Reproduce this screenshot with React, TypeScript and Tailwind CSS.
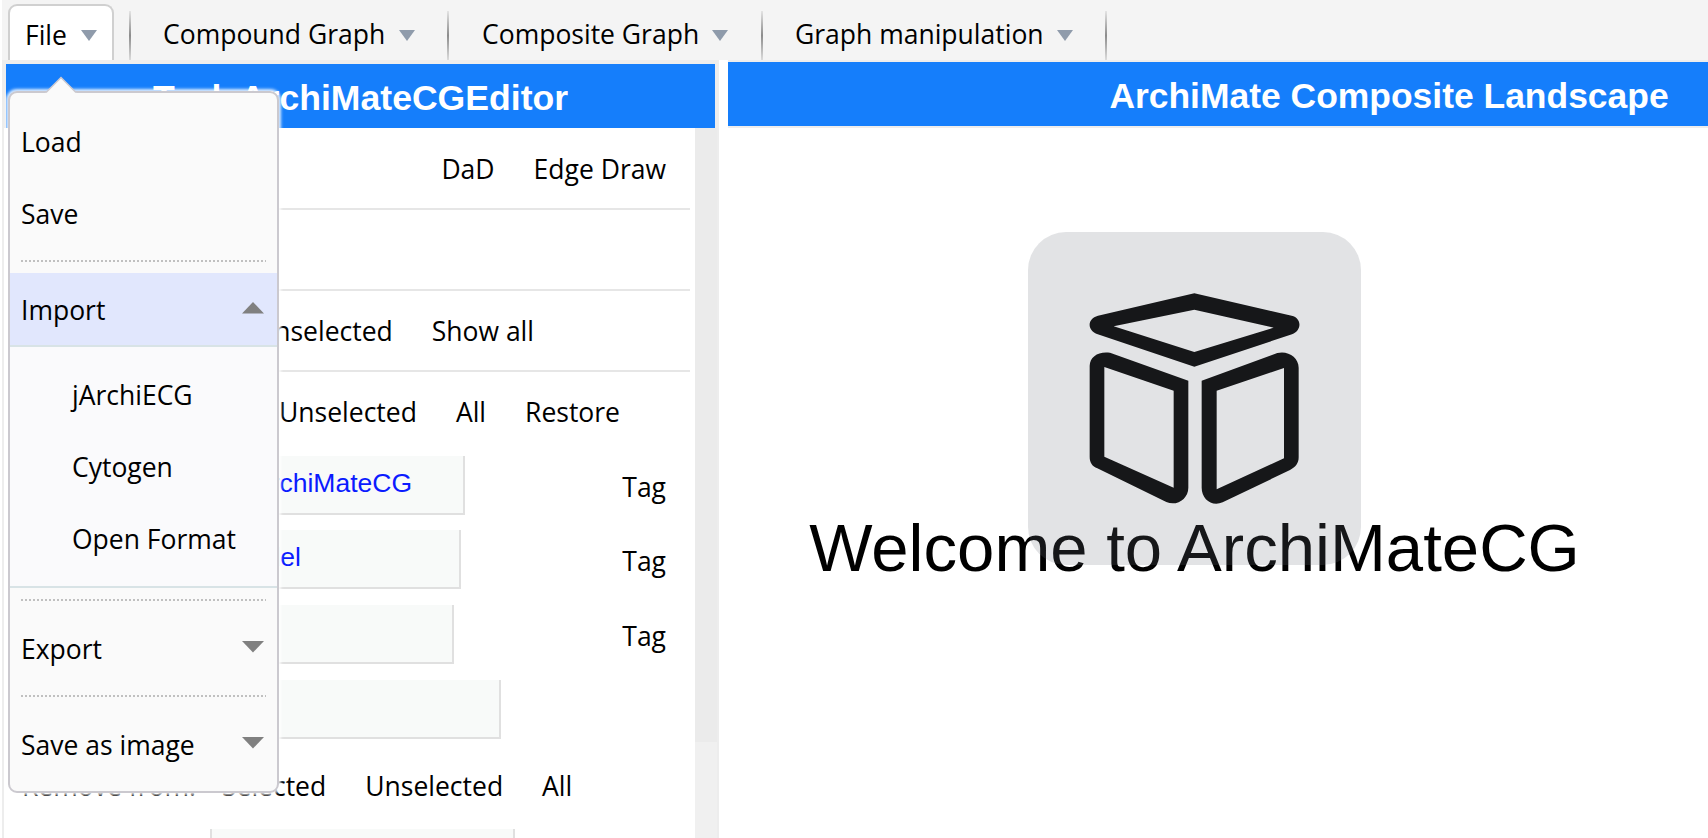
import React from "react";

const Caret = ({ up = false }: { up?: boolean }) => (
  <svg className="mb-[4px] mr-[1px] block shrink-0" width="22" height="12" viewBox="0 0 22 12">
    <path d={up ? "M11 0L22 11.5H0z" : "M11 11.5L22 0H0z"} fill="#808080" />
  </svg>
);

const Sep = () => (
  <div className="mt-[11px] h-[49px] w-[2px] shrink-0 bg-linear-to-b from-[#e4e4e4] via-[#8c8c8c] to-[#dcdcdc]" />
);

const Tab = ({ label, className }: { label: string; className: string }) => (
  <div className={`flex shrink-0 items-center whitespace-nowrap ${className}`}>
    <span className="grow">{label}</span>
    <svg className="mt-[2px] block shrink-0" width="16" height="11" viewBox="0 0 16 11">
      <path d="M0 0H16L8 11z" fill="#8f9bab" />
    </svg>
  </div>
);

const MenuItem = ({ label, arrow }: { label: string; arrow?: boolean }) => (
  <div className="flex h-[72px] items-center justify-between pl-[11px] pr-[12px] pt-[2px]">
    <span>{label}</span>
    {arrow && <Caret />}
  </div>
);

const Dots = ({ className }: { className: string }) => (
  <div
    className={`ml-[11px] mr-[11px] h-[2px] bg-[repeating-linear-gradient(90deg,#c0c0c0_0_2px,transparent_2px_4px)] ${className}`}
  />
);

const Field = ({ box, value, tag, className }: { box: string; value?: string; tag?: boolean; className: string }) => (
  <div className={`flex h-[59px] items-start justify-between pr-[24px] ${className}`}>
    <div
      className={`flex h-[59px] items-center justify-end border-b-2 border-r-2 border-[#e0e0e0] bg-[#f8faf9] pb-[4px] font-['Liberation_Sans',sans-serif] text-[26.5px] text-[#0b1bff] ${box}`}
    >
      {value}
    </div>
    {tag && <span className="pt-[13px]">Tag</span>}
  </div>
);

export default function App() {
  return (
    <div className="relative h-[838px] w-[1708px] overflow-hidden bg-white font-['Open_Sans',sans-serif] text-[26.5px] leading-[36px] text-black">
      <div className="ml-[2px] flex h-[60px] bg-[#f4f4f4]">
        <Tab
          label="File"
          className="ml-[6px] mt-[4px] h-[56px] w-[106px] rounded-t-[9px] border-2 border-b-0 border-[#d0d0d0] bg-white pl-[15px] pr-[15px] pt-[3px]"
        />
        <div className="w-[15px]" />
        <Sep />
        <Tab label="Compound Graph" className="w-[316px] pl-[32px] pr-[32px] pt-[8px]" />
        <Sep />
        <Tab label="Composite Graph" className="w-[312px] pl-[33px] pr-[33px] pt-[8px]" />
        <Sep />
        <Tab label="Graph manipulation" className="w-[342px] pl-[32px] pr-[32px] pt-[8px]" />
        <Sep />
      </div>

      <div className="flex h-[778px]">
        <div className="ml-[2px] flex w-[717px] shrink-0 flex-col border-r-2 border-[#ededed]">
          <div className="h-[68px] shrink-0 bg-[#ededed] pl-[4px] pr-[2px] pt-[4px]">
            <div className="flex h-[64px] items-center justify-center bg-[#157efb] pt-[3px] font-['Liberation_Sans',sans-serif] text-[35.6px] font-bold text-white">
              Task ArchiMateCGEditor
            </div>
          </div>
          <div className="flex grow border-l-2 border-[#ededed]">
            <div className="h-[710px] w-[691px] overflow-hidden pl-[18px] pr-[5px]">
              <div className="flex h-[82px] items-center justify-end gap-[39px] border-b-2 border-[#e6e6e6] pr-[24px] pt-[2px]">
                <span>DaD</span>
                <span>Edge Draw</span>
              </div>
              <div className="h-[81px] border-b-2 border-[#e6e6e6]" />
              <div className="flex h-[81px] items-center justify-end gap-[39px] border-b-2 border-[#e6e6e6] pr-[156px]">
                <span>Unselected</span>
                <span>Show all</span>
              </div>
              <div className="flex h-[84px] items-center justify-end gap-[39px] pb-[4px] pr-[70px]">
                <span>Unselected</span>
                <span>All</span>
                <span>Restore</span>
              </div>
              <Field box="ml-[178px] w-[265px] pr-[51px]" value="ArchiMateCG" tag className="" />
              <Field box="ml-[178px] w-[261px] pr-[158px]" value="Model" tag className="mt-[15px]" />
              <Field box="ml-[178px] w-[254px]" tag className="mt-[16px]" />
              <Field box="ml-[178px] w-[301px]" className="mt-[16px]" />
              <div className="mt-[29px] flex h-[36px] gap-[39px] whitespace-nowrap">
                <span className="w-[161px]">Remove from:</span>
                <span>Selected</span>
                <span>Unselected</span>
                <span>All</span>
              </div>
              <div className="ml-[188px] mt-[25px] h-[59px] w-[305px] border-x-2 border-[#e0e0e0] bg-[#f8faf9]" />
            </div>
            <div className="flex w-[22px] flex-col bg-[#f0f0f0]">
              <div className="h-[614px] bg-[#ebebeb]" />
            </div>
          </div>
        </div>

        <div className="ml-[9px] w-[1322px] shrink-0">
          <div className="flex h-[68px] items-center justify-center border-y-2 border-[#ededed] bg-[#157efb] pt-[3px] font-['Liberation_Sans',sans-serif] text-[35.45px] font-bold text-white">
            ArchiMate Composite Landscape
          </div>
          <div className="flex w-[933px] flex-col items-center pt-[104px]">
            <svg className="relative z-10 block" width="333" height="333" viewBox="85 66 999 999">
              <g fill="#000" fillRule="evenodd">
                <path d="M584 250L876 317C907 324 907 362 877 373L584 470L292 372C262 362 262 325 295 317ZM584 299L342 349L584 426L822 353Z" />
                <path d="M566 512V833C566 866 532 890 500 876L293 775C278 769 270 758 270 740V467C271 440 296 423 331 428ZM522 542L314 471V740L522 833Z" />
                <path d="M606 512V833C606 867 636 891 669 877L871 780C888 771 897 760 897 742V473C897 442 865 421 833 429ZM651 542L853 474V745L651 838Z" />
              </g>
              <rect x="85" y="66" width="999" height="999" rx="114" fill="#6f747e" fillOpacity="0.2" />
            </svg>
            <div className="-mt-[56px] whitespace-nowrap font-['Liberation_Sans',sans-serif] text-[67.1px] leading-[78px]">
              Welcome to ArchiMateCG
            </div>
          </div>
        </div>
      </div>

      <div className="absolute left-[8px] top-[91px] h-[702px] w-[271px] rounded-[9px] border-2 border-[#cbc9cf] bg-[#fafafa] pt-[12px] shadow-[0_0_3px_2px_rgba(255,255,255,0.85)]">
        <svg className="absolute left-[35px] top-[-17px]" width="32" height="18" viewBox="0 0 32 18">
          <path d="M0 18L1 16.5L16 1.5L31 16.5L32 18z" fill="#fafafa" />
          <path d="M1 16.5L16 1.5L31 16.5" fill="none" stroke="#cbc9cf" strokeWidth="1.5" />
        </svg>
        <MenuItem label="Load" />
        <MenuItem label="Save" />
        <Dots className="mt-[11px]" />
        <div className="mt-[11px] flex h-[72px] items-center justify-between bg-[#e1e7fd] pl-[11px] pr-[12px] pt-[2px]">
          <span>Import</span>
          <Caret up />
        </div>
        <div className="h-[243px] border-y-2 border-[#d8e3e6] bg-[#fafafc] pl-[62px] pt-[12px]">
          <div className="flex h-[72px] items-center">jArchiECG</div>
          <div className="flex h-[72px] items-center">Cytogen</div>
          <div className="flex h-[72px] items-center">Open Format</div>
        </div>
        <Dots className="mt-[11px] mb-[11px]" />
        <MenuItem label="Export" arrow />
        <Dots className="mt-[11px] mb-[11px]" />
        <MenuItem label="Save as image" arrow />
      </div>
    </div>
  );
}
